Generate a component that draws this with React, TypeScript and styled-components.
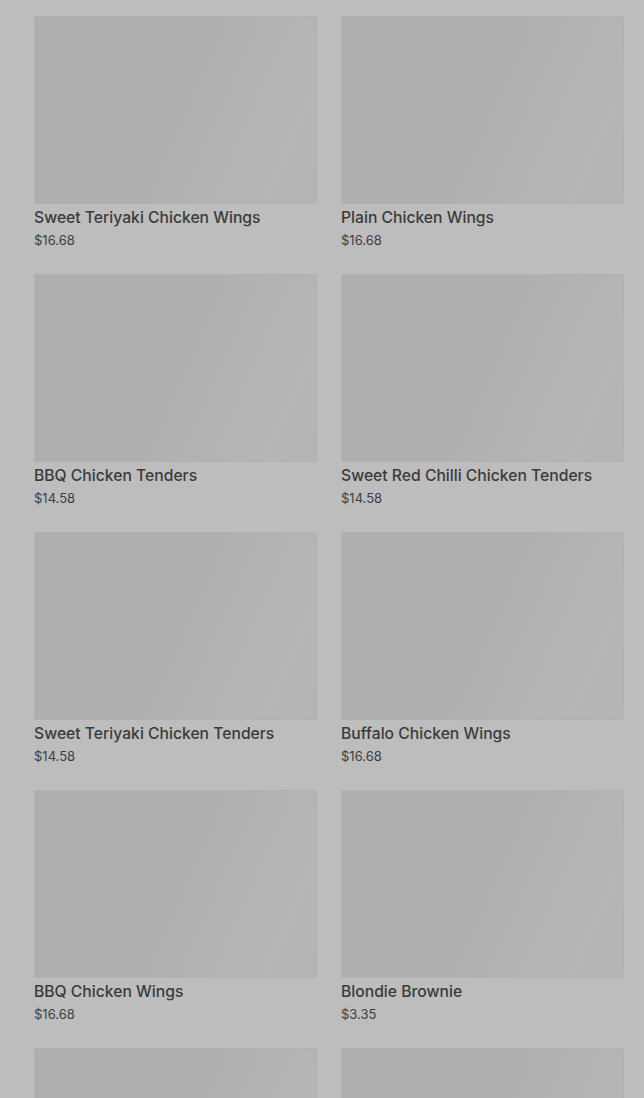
import React, { FunctionComponent } from "react";
import styled, { createGlobalStyle } from "styled-components";

type MenuItem = {
  name?: string;
  price?: string;
};

// last row is only partly in view, so its text is left out
const items: MenuItem[] = [
  { name: "Sweet Teriyaki Chicken Wings", price: "$16.68" },
  { name: "Plain Chicken Wings", price: "$16.68" },
  { name: "BBQ Chicken Tenders", price: "$14.58" },
  { name: "Sweet Red Chilli Chicken Tenders", price: "$14.58" },
  { name: "Sweet Teriyaki Chicken Tenders", price: "$14.58" },
  { name: "Buffalo Chicken Wings", price: "$16.68" },
  { name: "BBQ Chicken Wings", price: "$16.68" },
  { name: "Blondie Brownie", price: "$3.35" },
  {},
  {},
];

const GlobalStyle = createGlobalStyle`
  html, body {
    margin: 0;
    padding: 0;
    background: #bdbdbd;
    height: 1098px;
    overflow: hidden;
  }
  body {
    font-family: Inter, "Noto Sans", sans-serif;
    -webkit-font-smoothing: antialiased;
  }
`;

const Grid = styled.div`
  display: grid;
  grid-template-columns: 283px 283px;
  column-gap: 24px;
  row-gap: 25px;
  padding: 16px 20px 0 34px;
`;

const Card = styled.div`
  display: flex;
  flex-direction: column;
`;

const Thumb = styled.div`
  height: 188px;
  background: linear-gradient(114deg, #afafaf 0%, #afafaf 50%, #b6b6b6 85%, #b4b4b4 100%);
  box-shadow: inset 0 0 0 1px #b2b2b2;
`;

const Title = styled.div`
  margin-top: 4px;
  font-size: 15.7px;
  line-height: 20px;
  font-weight: 500;
  color: #3b3b3b;
  white-space: nowrap;
`;

const Price = styled.div`
  margin-top: 3px;
  font-size: 13px;
  line-height: 18px;
  color: #3f3f3f;
`;

const ProductCard: FunctionComponent<MenuItem> = ({ name, price }) => (
  <Card>
    <Thumb />
    {name ? <Title>{name}</Title> : null}
    {price ? <Price>{price}</Price> : null}
  </Card>
);

const App: FunctionComponent = () => (
  <>
    <GlobalStyle />
    <Grid>
      {items.map((item, i) => (
        <ProductCard key={item.name ?? i} {...item} />
      ))}
    </Grid>
  </>
);

export default App;
